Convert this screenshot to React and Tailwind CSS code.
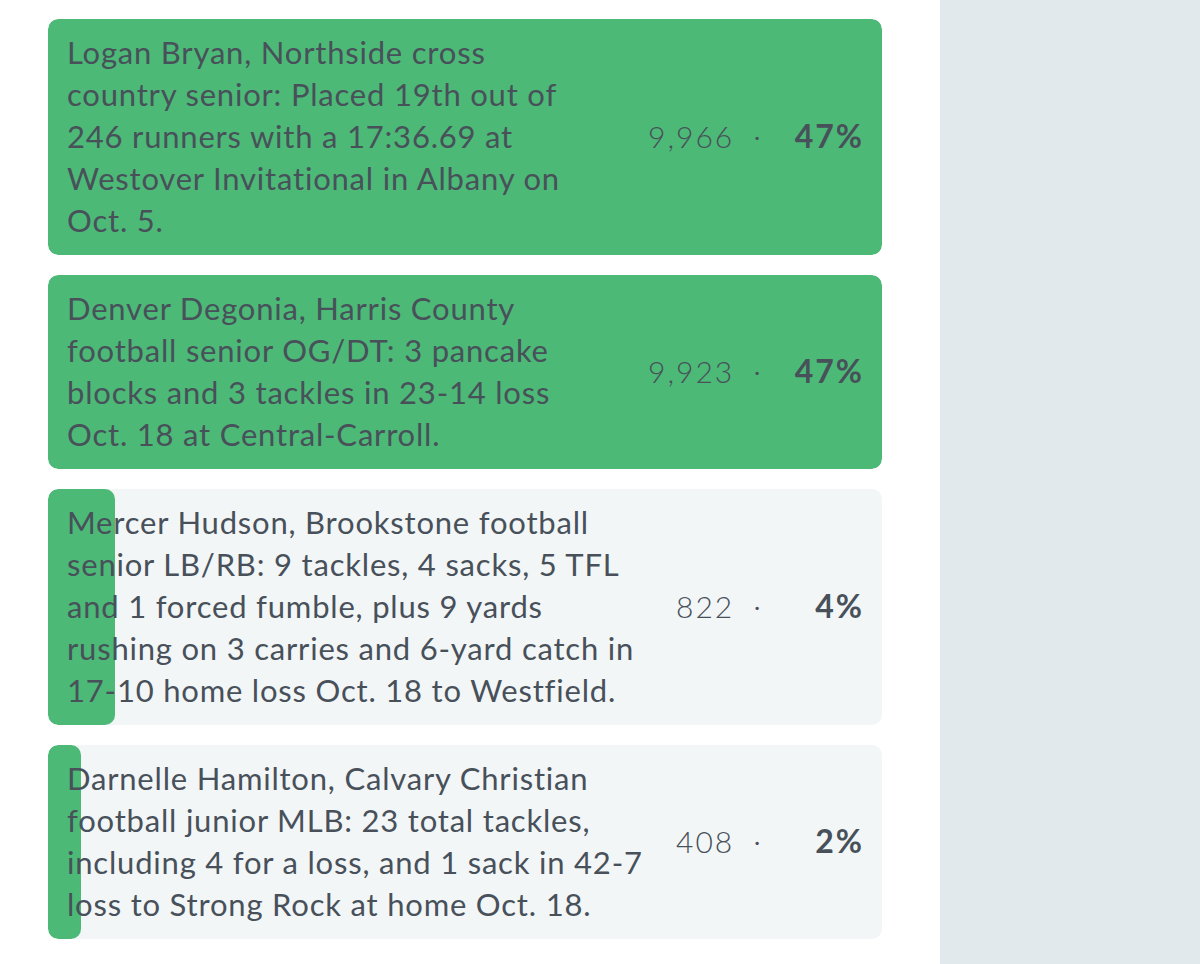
import React from "react";

// Each entry's blurb is kept as its printed lines.
const rows = [
  {
    lines: [
      "Logan Bryan, Northside cross",
      "country senior: Placed 19th out of",
      "246 runners with a 17:36.69 at",
      "Westover Invitational in Albany on",
      "Oct. 5.",
    ],
    votes: 9966,
    pct: 47,
  },
  {
    lines: [
      "Denver Degonia, Harris County",
      "football senior OG/DT: 3 pancake",
      "blocks and 3 tackles in 23-14 loss",
      "Oct. 18 at Central-Carroll.",
    ],
    votes: 9923,
    pct: 47,
  },
  {
    lines: [
      "Mercer Hudson, Brookstone football",
      "senior LB/RB: 9 tackles, 4 sacks, 5 TFL",
      "and 1 forced fumble, plus 9 yards",
      "rushing on 3 carries and 6-yard catch in",
      "17-10 home loss Oct. 18 to Westfield.",
    ],
    votes: 822,
    pct: 4,
  },
  {
    lines: [
      "Darnelle Hamilton, Calvary Christian",
      "football junior MLB: 23 total tackles,",
      "including 4 for a loss, and 1 sack in 42-7",
      "loss to Strong Rock at home Oct. 18.",
    ],
    votes: 408,
    pct: 2,
  },
];

const maxVotes = Math.max(...rows.map((r) => r.votes));

function ResultRow({ row }) {
  // bar length relative to the leader, in whole percent
  const fill = Math.min(100, Math.round((row.votes / maxVotes) * 100));
  return (
    <div className="relative overflow-hidden rounded-[10px] bg-[#f2f6f7]">
      <div
        className="absolute inset-y-0 left-0 rounded-[10px] bg-[#4cb977]"
        style={{ width: `${fill}%` }}
      />
      <div className="relative flex items-center gap-[20px] pl-[19px] pr-[18px] pt-[12px] pb-[13.5px] text-[#48505a]">
        <p className="min-w-0 flex-1 text-[31px] leading-[42px] tracking-[0.8px]">
          {row.lines.map((l, i) => (
            <span key={i} className="block whitespace-nowrap">
              {l}
            </span>
          ))}
        </p>
        <div className="flex shrink-0 items-center">
          <span className="text-[30px] font-light tracking-[2px]">
            {row.votes.toLocaleString("en-US")}
          </span>
          <span className="ml-[20px] mr-[32px] text-[22px]">·</span>
          <span className="w-[72px] text-right text-[32px] font-bold tracking-[2px]">
            {row.pct}%
          </span>
        </div>
      </div>
    </div>
  );
}

export default function App() {
  return (
    <div
      className="flex min-h-[964px] w-[1200px] bg-white"
      style={{ fontFamily: "Lato, 'Open Sans', sans-serif" }}
    >
      <div className="w-[940px] shrink-0 pl-[48px] pr-[58px] pt-[19px]">
        <div className="flex flex-col gap-[20.5px]">
          {rows.map((r, i) => (
            <ResultRow key={i} row={r} />
          ))}
        </div>
      </div>
      <div className="flex-1 bg-[#e2e9ec]" />
    </div>
  );
}
